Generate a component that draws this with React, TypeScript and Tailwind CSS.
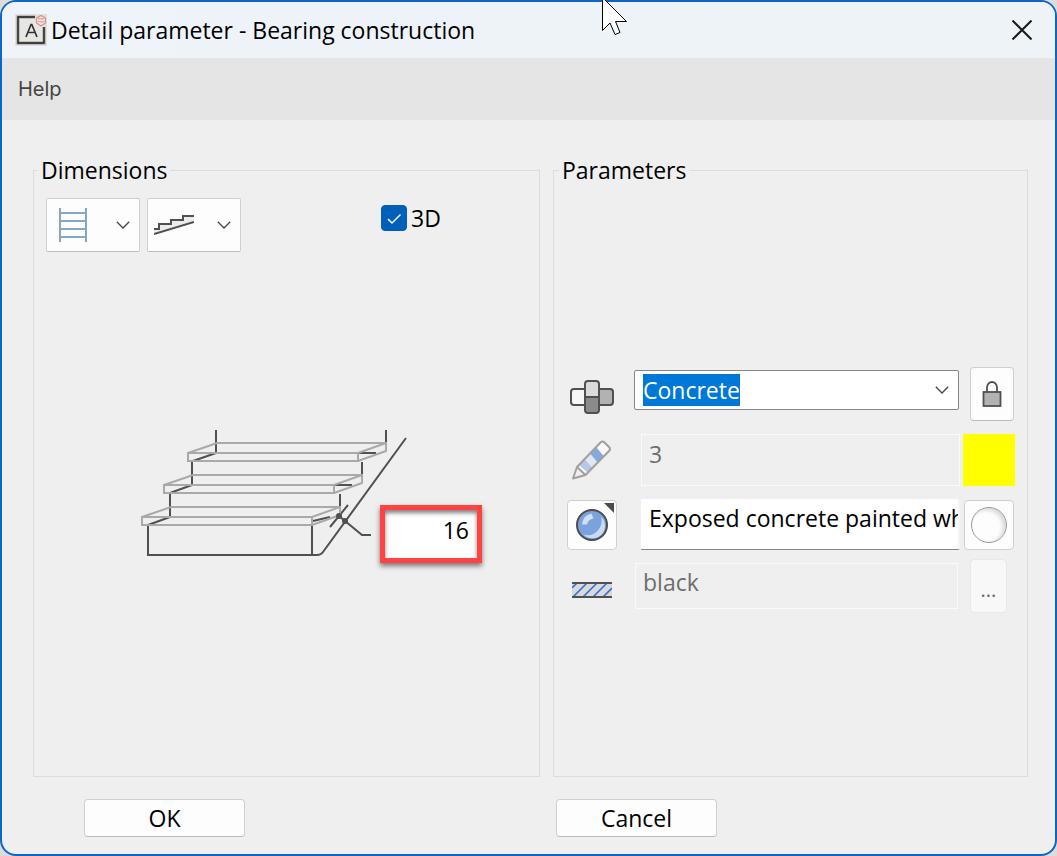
import { useState } from 'react';
import type { ReactNode } from 'react';

const steps = [
  { x: 188, y: 443 },
  { x: 164, y: 475 },
  { x: 142, y: 507 },
];

function Chevron() {
  return (
    <svg className="shrink-0" width="14" height="8" viewBox="0 0 14 8" fill="none" stroke="#444" strokeWidth="1.3" aria-hidden="true">
      <path d="M.8.8 7 7 13.2.8" />
    </svg>
  );
}

function AppIcon() {
  return (
    <svg className="shrink-0" width="32" height="32" viewBox="0 0 32 32" fill="none" aria-hidden="true">
      <rect width="32" height="32" fill="#dfdfdc" />
      <rect x="3" y="3" width="26" height="26" fill="#e6e6e3" />
      <path d="M20 3H3v26h26V13" stroke="#9a9a98" strokeWidth="3" />
      <path d="M20 3H3v26h26V13" stroke="#222" strokeWidth="1.4" />
      <path d="M11 23 16 10.500h.8L22 23M12.800 18.500h7.400" stroke="#333" strokeWidth="1.7" />
      <path d="m26 1.500 4.500 2.500v5L26 12l-4.500-3V4z" stroke="#e58b88" strokeWidth="1.200" />
      <path d="M23 5c2-1.500 3 1 6-.5M23 8c2-1.500 3 1 6-.5" stroke="#e58b88" />
    </svg>
  );
}

function LadderIcon() {
  return (
    <svg width="28" height="34" viewBox="0 0 28 34" fill="none" stroke="#86a6c3" strokeWidth="2" aria-hidden="true">
      <path d="M1 0v34M27 0v34M1 5h26M1 13h26M1 21h26M1 29h26" />
    </svg>
  );
}

function SlopeIcon() {
  return (
    <svg width="40" height="22" viewBox="0 -1 40 22" fill="none" stroke="#505050" strokeWidth="2" aria-hidden="true">
      <path d="M0 14h5V9h12V5h12V1h11v6L0 19z" fill="#ececec" stroke="none" />
      <path d="M0 14h5V9h12V5h12V1h11M0 19 40 7" />
    </svg>
  );
}

function MaterialIcon() {
  return (
    <svg width="44" height="34" viewBox="0 0 44 34" fill="none" stroke="#505050" strokeWidth="2" aria-hidden="true">
      <rect x="1" y="9" width="20" height="16" rx="3" fill="#f7f7f7" />
      <rect x="23" y="9" width="20" height="16" rx="3" fill="#b2b2b2" />
      <path d="M15 17V4q0-3 3-3h8q3 0 3 3v13z" fill="#dadada" />
      <path d="M15 17v13q0 3 3 3h8q3 0 3-3V17z" fill="#8b8b8b" />
    </svg>
  );
}

function PenIcon() {
  return (
    <svg width="40" height="40" viewBox="0 0 40 40" fill="none" aria-hidden="true">
      <path d="m5 27 8.500 8L39 9l-7.500-8z" fill="#f8f8f8" />
      <path d="m7 25 9 8 5-5-8-8.500z" fill="#b5c8e8" />
      <path d="m13 19.500 8 8.500 5-5-7.500-9z" fill="#dfe7f4" />
      <path d="m18.500 14 7.500 9 6-6.500-7.500-9z" fill="#87a8dc" />
      <path d="M5 27 28.500 2.500q2-2 4 0L37 7q2 2 0 4L13.500 35 1 38.500zM5 27l8.500 8" stroke="#a0a0a0" strokeWidth="2" strokeLinejoin="round" />
    </svg>
  );
}

function SurfaceIcon() {
  return (
    <svg className="shrink-0" width="44" height="44" viewBox="0 0 44 44" fill="none" aria-hidden="true">
      <path d="M34 0h10v10z" fill="#4c4c4c" />
      <circle cx="22" cy="22" r="15" fill="#7aa2dd" stroke="#4c4c4c" strokeWidth="2" />
      <path d="M31.500 14a12.400 12.400 0 0 1-18 17.500q8 2.500 14-3.500 5-5.500 4-14z" fill="#c9daf3" />
      <path d="M12 21.500q.5-9 9.500-11l2 5q-5.500 1-6.500 6z" fill="#cfdff5" />
    </svg>
  );
}

function HatchIcon() {
  return (
    <svg width="40" height="18" viewBox="0 0 40 18" fill="none" aria-hidden="true">
      <rect y="1" width="40" height="16" fill="#d9d9dc" />
      <path d="M0 7 5 2M1 16 15 2M11 16 25 2M21 16 35 2M31 16 40 7" stroke="#2f6fd0" strokeWidth="1.600" />
      <path d="M0 2h40M0 16h40" stroke="#505050" strokeWidth="2" />
    </svg>
  );
}

function LockIcon() {
  return (
    <svg width="20" height="26" viewBox="0 0 20 26" fill="none" stroke="#505050" strokeWidth="1.800" aria-hidden="true">
      <path d="M5 11V6.500a5 5.500 0 0 1 10 0V11" />
      <rect x="1.500" y="11" width="17" height="14" fill="#b2b2b2" />
    </svg>
  );
}

function StairDrawing() {
  return (
    <svg className="shrink-0 overflow-visible" width="232" height="133" viewBox="140 430 232 133" fill="none" strokeWidth="2" aria-hidden="true">
      <g stroke="#505050">
        <path d="M216 430v23l-23 8M192 461v24l-22 8M170 493v24l-22 8M386 430v13M362 462v13M340 494v13" />
        <path d="M358 453h18M334 485h18M313 521l17-4" />
        <path d="M148 525v30h169q4 0 6-3l83-114M312 525v30M330 527l18-22M339 516l23 19h9" />
      </g>
      <g stroke="#a9a9a9">
        {steps.map(({ x, y }) => (
          <g key={y}>
            <path d={`M${x} ${y + 10}h170v8H${x}z`} />
            <path d={`M${x} ${y + 10}l29-10h169v8l-28 10M${x + 170} ${y + 10}l28-10`} />
          </g>
        ))}
      </g>
      <circle cx="339" cy="516" r="3" fill="#505050" />
      <circle cx="345" cy="521" r="3" fill="#505050" />
    </svg>
  );
}

function PickerButton({ label, children }: { label: string; children: ReactNode }) {
  return (
    <button
      type="button"
      aria-label={label}
      aria-haspopup="listbox"
      className="flex h-[54px] w-[94px] items-center justify-between rounded-xs border border-[#cfcfcf] border-b-[#bcbcbc] bg-[#fdfdfd] pr-[9px] pl-1.5"
    >
      <span className="flex w-10 justify-center">{children}</span>
      <Chevron />
    </button>
  );
}

function ParameterRow({ icon, children, action, className }: { icon: ReactNode; children: ReactNode; action: ReactNode; className: string }) {
  return (
    <div className={`grid grid-cols-[50px_minmax(0,1fr)_52px] grid-rows-1 items-center ${className}`}>
      <div className="flex justify-center">{icon}</div>
      {children}
      {action}
    </div>
  );
}

export default function App() {
  const [is3d, setIs3d] = useState(true);
  const [thickness, setThickness] = useState('16');
  const [surface, setSurface] = useState('Exposed concrete painted white');

  return (
    <div className="min-h-screen bg-[#dcdcdc] font-['Open_Sans',sans-serif] text-[23px] leading-8 text-black">
      <main className="relative flex min-h-screen flex-col overflow-hidden rounded-2xl border-2 border-[#0f65c6] bg-[#efefef]">
        <header className="flex h-14 items-center justify-between bg-linear-to-r from-[#eff3fa] to-[#edf3f7] pr-[19px] pl-[13px]">
          <div className="flex items-center gap-1">
            <AppIcon />
            <h1>Detail parameter - Bearing construction</h1>
          </div>
          <button type="button" aria-label="Close" className="p-1">
            <svg width="20" height="20" viewBox="0 0 20 20" stroke="#1a1a1a" strokeWidth="2" aria-hidden="true">
              <path d="m.5.5 19 19m0-19-19 19" />
            </svg>
          </button>
        </header>

        <nav className="flex h-[62px] items-center bg-[#e5e5e5] px-4 font-[Inter,sans-serif] text-xl text-[#444]">
          <button type="button">Help</button>
        </nav>

        <div className="grid flex-1 grid-cols-[507fr_475fr] grid-rows-[1fr_auto] gap-x-[13px] pt-[34px] pr-[27px] pb-[17px] pl-[31px]">
          <fieldset className="min-w-0 border border-[#dcdcdc] px-3 pt-3">
            <legend className="-ml-2 px-[3px]">Dimensions</legend>
            <div className="flex items-start">
              <div className="flex gap-[7px]">
                <PickerButton label="Structure type">
                  <LadderIcon />
                </PickerButton>
                <PickerButton label="Stair shape">
                  <SlopeIcon />
                </PickerButton>
              </div>
              <label className="ml-[140px] flex items-center gap-1 pt-1">
                <span className="relative flex">
                  <input
                    type="checkbox"
                    checked={is3d}
                    onChange={(e) => setIs3d(e.target.checked)}
                    className="peer size-[26px] appearance-none rounded border border-[#8a8a8a] bg-white checked:border-[#005fb8] checked:bg-[#005fb8]"
                  />
                  <svg className="pointer-events-none absolute inset-0 hidden peer-checked:block" width="26" height="26" viewBox="0 0 26 26" fill="none" stroke="#fff" strokeWidth="1.500" aria-hidden="true">
                    <path d="m7 14 4 4 8.500-8.500" />
                  </svg>
                </span>
                3D
              </label>
            </div>

            <div className="mt-[178px] flex items-end gap-2 pl-[94px]">
              <StairDrawing />
              <input
                aria-label="Thickness"
                value={thickness}
                onChange={(e) => setThickness(e.target.value)}
                className="h-[58px] w-[102px] border-5 border-[#ff4343] bg-white pr-2 pb-2 text-right shadow-[0_3px_5px_rgba(0,0,0,0.5),inset_0_3px_4px_rgba(0,0,0,0.5)] outline-none"
              />
            </div>
          </fieldset>

          <fieldset className="min-w-0 border border-[#dcdcdc] pr-3 pl-[13px]">
            <legend className="-ml-2 px-[3px]">Parameters</legend>
            <div className="mt-[181px] flex flex-col gap-[13px]">
              <ParameterRow
                className="h-[54px]"
                icon={
                  <span className="pt-1.5">
                    <MaterialIcon />
                  </span>
                }
                action={
                  <button type="button" aria-label="Lock" className="ml-[7px] flex h-[54px] w-11 items-center justify-center rounded border border-[#cfcfcf] border-b-[#bcbcbc] bg-[#fdfdfd]">
                    <LockIcon />
                  </button>
                }
              >
                <label className="mr-1 mb-2 ml-[17px] flex h-10 items-center justify-between rounded-xs border border-[#868686] bg-white pr-[9px] pl-2">
                  <select aria-label="Material" className="field-sizing-content appearance-none bg-[#0078d7] text-white outline-none">
                    <option>Concrete</option>
                  </select>
                  <Chevron />
                </label>
              </ParameterRow>

              <ParameterRow
                className="h-[52px]"
                icon={<PenIcon />}
                action={<button type="button" aria-label="Pen color" className="size-[52px] bg-[#ffff00]" />}
              >
                <input aria-label="Pen" disabled value="3" className="mr-[3px] ml-6 h-[52px] min-w-0 border border-[#fafafa] px-[7px] pb-3 text-[#6d6d6d]" />
              </ParameterRow>

              <ParameterRow
                className="h-[51px]"
                icon={
                  <button type="button" aria-label="Surface" className="flex size-[50px] items-center justify-center rounded border border-[#cfcfcf] bg-[#fdfdfd]">
                    <SurfaceIcon />
                  </button>
                }
                action={
                  <button type="button" aria-label="Surface preview" className="ml-px flex size-[50px] items-center justify-center rounded border border-[#cfcfcf] bg-[#fdfdfd]">
                    <span className="size-9 rounded-full border border-[#999] shadow-[inset_-3px_2px_4px_rgba(0,0,0,0.15)]" />
                  </button>
                }
              >
                <input
                  aria-label="Surface name"
                  value={surface}
                  onChange={(e) => setSurface(e.target.value)}
                  className="mr-[3px] ml-6 h-[51px] min-w-0 border-r-2 border-b border-r-[#f4f4f4] border-b-[#868686] bg-white pb-3 pl-2 outline-none"
                />
              </ParameterRow>

              <ParameterRow
                className="h-[46px]"
                icon={
                  <span className="pt-2">
                    <HatchIcon />
                  </span>
                }
                action={
                  <button type="button" aria-label="More" className="ml-[7px] flex h-[54px] w-[37px] items-center justify-center rounded border border-[#e8e8e8] bg-[#f8f8f8] pt-2 text-xl text-[#666]">
                    ...
                  </button>
                }
              >
                <input aria-label="Hatch" disabled value="black" className="mr-[5px] ml-[18px] h-[46px] min-w-0 border border-[#fafafa] px-[7px] pb-2 text-[#6d6d6d]" />
              </ParameterRow>
            </div>
          </fieldset>

          <div className="mt-[22px] pl-[51px]">
            <button type="button" className="h-[38px] w-[161px] rounded border border-[#cfcfcf] border-b-[#bcbcbc] bg-[#fdfdfd]">
              OK
            </button>
          </div>
          <div className="mt-[22px] pl-[3px]">
            <button type="button" className="h-[38px] w-[161px] rounded border border-[#cfcfcf] border-b-[#bcbcbc] bg-[#fdfdfd]">
              Cancel
            </button>
          </div>
        </div>
      </main>

      <svg className="pointer-events-none absolute top-0 left-[602px]" width="26" height="36" viewBox="0 0 26 36" fill="#fff" stroke="#000" aria-hidden="true">
        <path d="M.5-1v31.500L8 23l5 11.500 5-2L13.500 21.500h11L2-1z" />
      </svg>
    </div>
  );
}
